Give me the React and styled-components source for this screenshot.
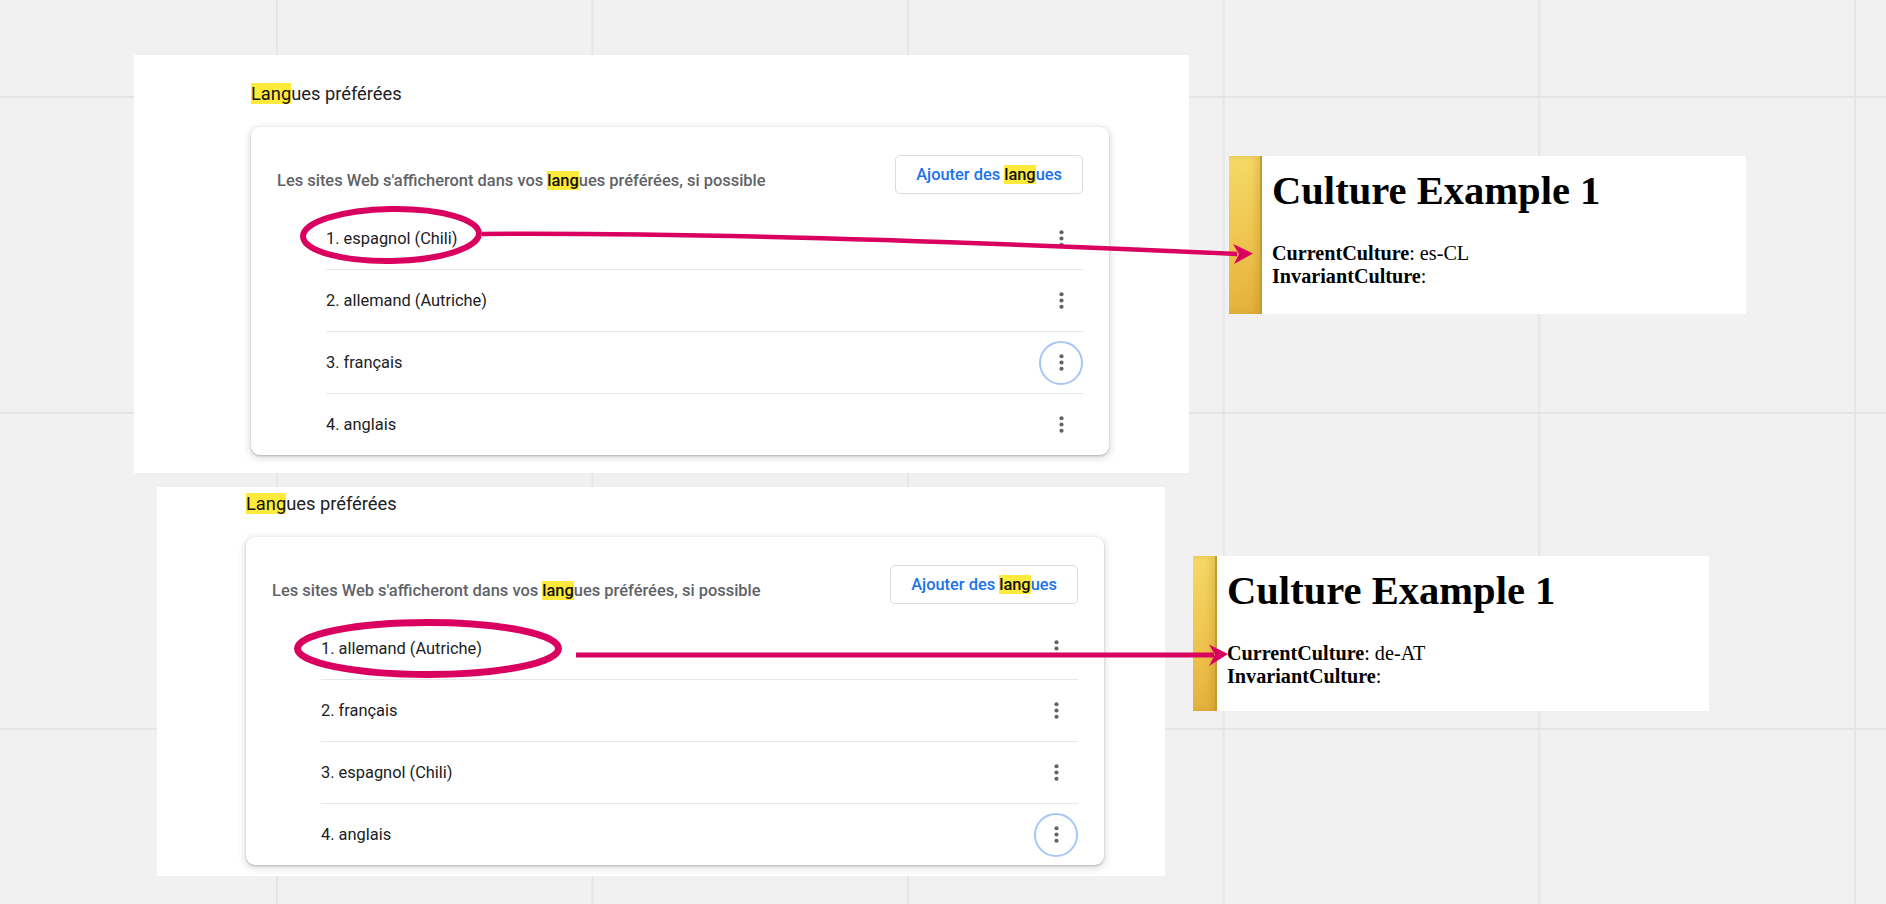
import React from "react";
import styled, { createGlobalStyle } from "styled-components";

const Global = createGlobalStyle`
  html, body { margin: 0; padding: 0; }
  body {
    background: #f1f1f1;
    font-family: Roboto, "Noto Sans", Arial, sans-serif;
  }
`;

const Board = styled.main`
  position: relative;
  width: 1886px;
  height: 904px;
  overflow: hidden;
  background-color: #f1f1f1;
  background-image:
    linear-gradient(to right, #e5e5e5 0 2px, transparent 2px),
    linear-gradient(to bottom, #e5e5e5 0 2px, transparent 2px);
  background-size: 315.6px 316px;
  background-position: 276px 96px;
`;

/* screenshot frame pasted on the board */
const Shot = styled.section`
  position: absolute;
  left: ${(p) => p.$x}px;
  top: ${(p) => p.$y}px;
  width: ${(p) => p.$w}px;
  height: ${(p) => p.$h}px;
  box-sizing: border-box;
  padding: ${(p) => p.$pt}px 0 0 ${(p) => p.$pl}px;
  background: #fff;
  display: flex;
  flex-direction: column;
  gap: 23px;
`;

const PageTitle = styled.h2`
  margin: 0;
  font-size: 18.3px;
  line-height: 20px;
  font-weight: 400;
  color: #202124;
`;

const Hit = styled.mark`
  background: #feea3a;
  color: #111;
`;

const Card = styled.div`
  width: 858px;
  box-sizing: border-box;
  background: #fff;
  border-radius: 9px;
  box-shadow: 0 1px 2px rgba(60, 64, 67, 0.3), 0 2px 6px 2px rgba(60, 64, 67, 0.15);
  display: flex;
  flex-direction: column;
`;

const CardHeader = styled.div`
  display: flex;
  align-items: flex-start;
  justify-content: space-between;
  padding: 28px 26px 0 26px;
`;

const Description = styled.p`
  margin: 0;
  padding-top: 16px;
  font-size: 16.45px;
  line-height: 20px;
  font-weight: 500;
  color: #5f6368;
`;

const AddButton = styled.button`
  height: 39px;
  box-sizing: border-box;
  padding: 0 20px;
  border: 1px solid #dadce0;
  border-radius: 5px;
  background: #fff;
  font-family: inherit;
  font-size: 16.4px;
  font-weight: 500;
  color: #1a73e8;
`;

const LangList = styled.ul`
  list-style: none;
  margin: 13px 26px 0 75px;
  padding: 0;
`;

const LangRow = styled.li`
  height: 62px;
  box-sizing: border-box;
  display: flex;
  align-items: center;
  justify-content: space-between;
  font-size: 16.4px;
  color: #202124;
  & + & {
    border-top: 1px solid #e6e7ea;
  }
`;

const Kebab = styled.span`
  width: 44px;
  height: 44px;
  box-sizing: border-box;
  border-radius: 50%;
  border: 2px solid ${(p) => (p.$focused ? "#a6c6f8" : "transparent")};
  display: grid;
  place-items: center;
  color: #5f6368;
`;

const MoreVert = () => (
  <svg width="25" height="25" viewBox="0 0 24 24" fill="currentColor" aria-hidden="true">
    <circle cx="12" cy="6" r="2" />
    <circle cx="12" cy="12" r="2" />
    <circle cx="12" cy="18" r="2" />
  </svg>
);

/* culture output box */
const CultureCard = styled.article`
  position: absolute;
  left: ${(p) => p.$x}px;
  top: ${(p) => p.$y}px;
  width: ${(p) => p.$w}px;
  height: ${(p) => p.$h}px;
  display: flex;
  background: #fff;
`;

const GoldBar = styled.div`
  flex: none;
  width: ${(p) => p.$w}px;
  background: linear-gradient(165deg, #f5da68 0%, #efc44e 55%, #e3b03c 100%);
  box-shadow: inset -2px 0 0 #c49a34, inset -6px 0 6px rgba(170, 120, 20, 0.25);
`;

const CultureBody = styled.div`
  padding: 12px 0 0 10px;
  font-family: "Liberation Serif", "Times New Roman", serif;
  color: #000;
`;

const CultureTitle = styled.h1`
  margin: 0;
  font-size: 40.6px;
  line-height: 46px;
  font-weight: 700;
`;

const CultureLines = styled.div`
  margin-top: 28px;
  font-size: 20.2px;
  line-height: 23px;
`;

const Overlay = styled.svg`
  position: absolute;
  left: 0;
  top: 0;
  pointer-events: none;
`;

const PINK = "#d9005f";

function SettingsShot({ x, y, w, h, pt, pl, langs, focused }) {
  return (
    <Shot $x={x} $y={y} $w={w} $h={h} $pt={pt} $pl={pl}>
      <PageTitle>
        <Hit>Lang</Hit>ues préférées
      </PageTitle>
      <Card>
        <CardHeader>
          <Description>
            Les sites Web s'afficheront dans vos <Hit>lang</Hit>ues préférées, si possible
          </Description>
          <AddButton>
            Ajouter des <Hit>lang</Hit>ues
          </AddButton>
        </CardHeader>
        <LangList>
          {langs.map((l, i) => (
            <LangRow key={l}>
              <span>
                {i + 1}. {l}
              </span>
              <Kebab $focused={i === focused}>
                <MoreVert />
              </Kebab>
            </LangRow>
          ))}
        </LangList>
      </Card>
    </Shot>
  );
}

function CultureBox({ x, y, w, h, bar, value }) {
  return (
    <CultureCard $x={x} $y={y} $w={w} $h={h}>
      <GoldBar $w={bar} />
      <CultureBody>
        <CultureTitle>Culture Example 1</CultureTitle>
        <CultureLines>
          <div>
            <b>CurrentCulture</b>: {value}
          </div>
          <div>
            <b>InvariantCulture</b>:
          </div>
        </CultureLines>
      </CultureBody>
    </CultureCard>
  );
}

export default function App() {
  return (
    <>
      <Global />
      <Board>
        <SettingsShot
          x={134}
          y={55}
          w={1055}
          h={418}
          pt={29}
          pl={117}
          langs={["espagnol (Chili)", "allemand (Autriche)", "français", "anglais"]}
          focused={2}
        />
        <SettingsShot
          x={157}
          y={487}
          w={1008}
          h={389}
          pt={7}
          pl={89}
          langs={["allemand (Autriche)", "français", "espagnol (Chili)", "anglais"]}
          focused={3}
        />
        <CultureBox x={1229} y={156} w={517} h={158} bar={33} value="es-CL" />
        <CultureBox x={1193} y={556} w={516} h={155} bar={24} value="de-AT" />

        <Overlay width="1886" height="904" viewBox="0 0 1886 904">
          <ellipse cx="391" cy="235" rx="88" ry="26" fill="none" stroke={PINK} strokeWidth="6" transform="rotate(-1 391 235)" />
          <path d="M482 234 Q760 232 1237 254" fill="none" stroke={PINK} strokeWidth="4.5" />
          <polygon points="1253,253.5 1233,244 1239,254 1234,264" fill={PINK} />

          <ellipse cx="428" cy="648.5" rx="130.5" ry="26" fill="none" stroke={PINK} strokeWidth="7" />
          <path d="M576 655 H1214" fill="none" stroke={PINK} strokeWidth="5" />
          <polygon points="1228,654 1209,644.5 1215,654.5 1209,666" fill={PINK} />
        </Overlay>
      </Board>
    </>
  );
}
